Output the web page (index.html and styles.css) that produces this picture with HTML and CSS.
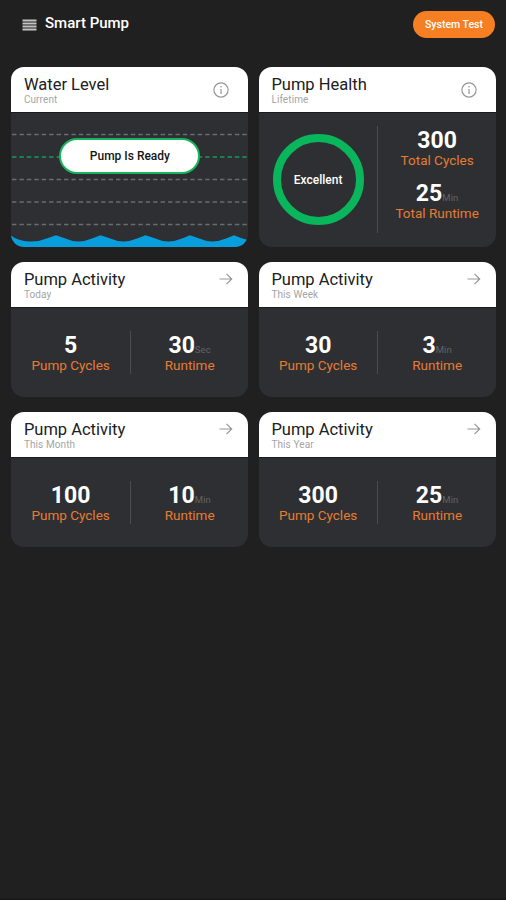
FILE: index.html
```html
<!DOCTYPE html>
<html lang="en">
<head>
<meta charset="utf-8">
<title>Smart Pump</title>
<link rel="stylesheet" href="styles.css">
</head>
<body>
<header class="topbar">
  <svg class="menu" width="15" height="12" viewBox="0 0 15 12"><path d="M0.5 1.5h14M0.5 4.5h14M0.5 7.5h14M0.5 10.5h14" stroke="#c4c4c4" stroke-width="1.8"/></svg>
  <h1>Smart Pump</h1>
  <button class="test">System Test</button>
</header>
<main class="grid">
  <section class="card">
    <div class="head"><div><h2>Water Level</h2><p>Current</p></div>
      <svg class="info" width="16" height="16" viewBox="0 0 16 16"><circle cx="8" cy="8" r="7.1"/><path d="M8 7v5M8 4v1.6"/></svg></div>
    <div class="tank">
      <svg class="water" width="237" height="135" viewBox="0 0 237 135">
        <g class="levels"><path d="M1 21.500h236"/><path class="ready" d="M1 44h236"/><path d="M1 66.500h236M1 89h236M1 111.500h236"/></g>
        <path fill="#079edb" d="M0 122.500Q4 126 9 127Q23 131 37 125L45 122.300L53 125Q67 131.500 81 125.500L89.500 122.300L98 125Q112 131.500 126 125.500L134.500 122.300L143 125Q157 131.500 171 125.500L179 122.300L187 125Q201 131.500 215 125.500L223 122.300L230 125L237 127V135H0Z"/>
      </svg>
      <span class="status">Pump Is Ready</span>
    </div>
  </section>
  <section class="card">
    <div class="head"><div><h2>Pump Health</h2><p>Lifetime</p></div>
      <svg class="info" width="16" height="16" viewBox="0 0 16 16"><circle cx="8" cy="8" r="7.1"/><path d="M8 7v5M8 4v1.6"/></svg></div>
    <div class="stats health">
      <div><div class="ring">Excellent</div></div>
      <i class="rule"></i>
      <div class="totals">
        <div class="stat"><b>300</b><span>Total Cycles</span></div>
        <div class="stat"><b>25<small>Min</small></b><span>Total Runtime</span></div>
      </div>
    </div>
  </section>
  <section class="card">
    <div class="head"><div><h2>Pump Activity</h2><p>Today</p></div><svg class="arrow" width="14" height="12" viewBox="0 0 14 12"><path d="M.5 6h12M7.500 .8L12.700 6L7.500 11.200"/></svg></div>
    <div class="stats"><div class="stat"><b>5</b><span>Pump Cycles</span></div><i class="rule"></i><div class="stat"><b>30<small>Sec</small></b><span>Runtime</span></div></div>
  </section>
  <section class="card">
    <div class="head"><div><h2>Pump Activity</h2><p>This Week</p></div><svg class="arrow" width="14" height="12" viewBox="0 0 14 12"><path d="M.5 6h12M7.500 .8L12.700 6L7.500 11.200"/></svg></div>
    <div class="stats"><div class="stat"><b>30</b><span>Pump Cycles</span></div><i class="rule"></i><div class="stat"><b>3<small>Min</small></b><span>Runtime</span></div></div>
  </section>
  <section class="card">
    <div class="head"><div><h2>Pump Activity</h2><p>This Month</p></div><svg class="arrow" width="14" height="12" viewBox="0 0 14 12"><path d="M.5 6h12M7.500 .8L12.700 6L7.500 11.200"/></svg></div>
    <div class="stats"><div class="stat"><b>100</b><span>Pump Cycles</span></div><i class="rule"></i><div class="stat"><b>10<small>Min</small></b><span>Runtime</span></div></div>
  </section>
  <section class="card">
    <div class="head"><div><h2>Pump Activity</h2><p>This Year</p></div><svg class="arrow" width="14" height="12" viewBox="0 0 14 12"><path d="M.5 6h12M7.500 .8L12.700 6L7.500 11.200"/></svg></div>
    <div class="stats"><div class="stat"><b>300</b><span>Pump Cycles</span></div><i class="rule"></i><div class="stat"><b>25<small>Min</small></b><span>Runtime</span></div></div>
  </section>
</main>
</body>
</html>
```
FILE: styles.css
```css
* { box-sizing: border-box; }
body { margin: 0; height: 900px; background: #202020; border-bottom: 1px solid #171014; font-family: Roboto, sans-serif; color: #fff; overflow: hidden; }
h1, h2, p { margin: 0; font-weight: 400; }
.topbar { height: 67px; display: flex; align-items: flex-start; padding: 10px 11px 0 22px; }
.menu { margin-top: 9px; }
h1 { margin: 4px 0 0 8px; font-size: 15px; line-height: 18px; font-weight: 500; }
.test { margin: 1px 0 0 auto; width: 82px; height: 27px; padding: 0; border: 0; border-radius: 14px; background: #f57f22; color: #fff; font: 500 10.5px/27px Roboto, sans-serif; }
.grid { display: grid; grid-template-columns: 237px 237px; column-gap: 10.5px; grid-template-rows: 180px 135px 135px; row-gap: 15px; padding-left: 11.4px; }
.card { display: flex; flex-direction: column; overflow: hidden; border-radius: 13px; background: #2e2f32; }
.head { height: 46px; flex: none; display: flex; justify-content: space-between; padding: 8px 15px 0 12.5px; background: #fff; border-bottom: 1px solid #1b1b1d; color: #202020; }
h2 { font-size: 16.5px; line-height: 20px; white-space: nowrap; }
.head p { font-size: 10px; line-height: 11px; color: #a5a5a5; letter-spacing: .1px; margin-top: -1px; }
.info { margin: 7px 4px 0 0; fill: none; stroke: #969696; stroke-width: 1.2; }
.arrow { margin-top: 3px; fill: none; stroke: #989898; stroke-width: 1.2; }
.tank { flex: 1; display: grid; justify-items: center; }
.tank > * { grid-area: 1 / 1; }
.water { display: block; }
.levels { fill: none; stroke: #6b6c6e; stroke-width: 1.4; stroke-dasharray: 4.4 3.03; }
.levels .ready { stroke: #199b58; }
.status { z-index: 1; width: 141px; height: 36px; margin-top: 25px; border: 2px solid #18b65c; border-radius: 18px; background: #fff; color: #151515; text-align: center; font-size: 12px; line-height: 33px; font-weight: 500; }
.stats { flex: 1; display: grid; grid-template-columns: 118.5px 1px 117.5px; padding-top: 23px; }
.rule { width: 1px; height: 43px; background: #4b4c4f; }
.stat { display: flex; flex-direction: column; align-items: center; padding-top: 2px; }
.stat b { height: 26px; font-size: 23px; line-height: 26px; font-weight: 700; white-space: nowrap; }
.stat small { font-size: 9.5px; line-height: 1; font-weight: 400; color: #626366; letter-spacing: .1px; }
.stat span { font-size: 13.5px; line-height: 16px; color: #e67c32; white-space: nowrap; margin-top: -2px; }
.health { padding-top: 13px; }
.health .rule { height: 107px; }
.ring { width: 91px; height: 91px; margin: 8px auto 0; border: 8px solid #09b65b; border-radius: 50%; display: flex; align-items: center; justify-content: center; font-size: 12px; font-weight: 500; }
.totals { display: flex; flex-direction: column; gap: 11px; }
```
